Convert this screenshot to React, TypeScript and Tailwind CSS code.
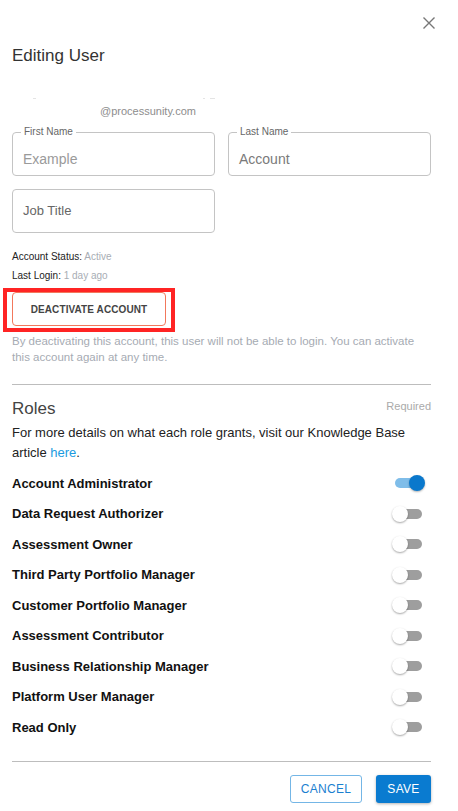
import React from "react";

const roles: { name: string; on: boolean }[] = [
  { name: "Account Administrator", on: true },
  { name: "Data Request Authorizer", on: false },
  { name: "Assessment Owner", on: false },
  { name: "Third Party Portfolio Manager", on: false },
  { name: "Customer Portfolio Manager", on: false },
  { name: "Assessment Contributor", on: false },
  { name: "Business Relationship Manager", on: false },
  { name: "Platform User Manager", on: false },
  { name: "Read Only", on: false },
];

function Toggle({ on }: { on: boolean }) {
  return (
    <div className="relative w-[33px] h-[16px] mr-[6px]">
      <div
        className={
          "absolute left-[3px] top-[3px] w-[27px] h-[10px] rounded-full " +
          (on ? "bg-[#7fbde9]" : "bg-[#9e9e9e]")
        }
      />
      {on ? (
        <div className="absolute right-0 top-0 w-4 h-4 rounded-full bg-[#0a78cc] shadow-[0_1px_2px_rgba(0,0,0,0.3)]" />
      ) : (
        <div className="absolute left-0 top-0 w-4 h-4 rounded-full bg-white shadow-[0_1px_2px_rgba(0,0,0,0.35)]" />
      )}
    </div>
  );
}

function Field({ label, value, valueClass }: { label?: string; value: string; valueClass: string }) {
  return (
    <div
      className={
        "relative h-[44px] rounded-[4px] border border-[#c4c4c4] flex items-center pl-[10px] " +
        (label ? "pt-[11px]" : "")
      }
    >
      {label && (
        <span className="absolute -top-[7px] left-[8px] bg-white px-[3px] text-[10px] leading-[12px] text-[#666]">
          {label}
        </span>
      )}
      <span className={valueClass}>{value}</span>
    </div>
  );
}

export default function App() {
  return (
    <div className="relative w-[458px] h-[811px] bg-white pl-3 pr-[27px] font-['Liberation_Sans',Arial,sans-serif] overflow-hidden">
      <button className="absolute left-[422px] top-[16px] w-[14px] h-[14px]" aria-label="close">
        <svg width="14" height="14" viewBox="0 0 14 14">
          <path d="M1.5 1.5 L12.5 12.5 M12.5 1.5 L1.5 12.5" stroke="#777" strokeWidth="1.4" fill="none" />
        </svg>
      </button>

      <div className="pt-[46px] text-[17px] leading-[20px] text-[#333]">Editing User</div>

      <div className="mt-[32px] h-[2px] flex">
        <span className="ml-[21px] w-[3px] h-[1px] bg-[#e4e4e4]" />
        <span className="ml-[167px] w-[2px] h-[1px] bg-[#e4e4e4]" />
        <span className="ml-[5px] w-[5px] h-[1px] bg-[#e4e4e4]" />
      </div>
      <div className="mt-[4px] pl-[88px] text-[11px] leading-[14px] text-[#8d8d8d]">@processunity.com</div>

      <div className="mt-[14px] grid grid-cols-2 gap-x-[13px] gap-y-[13px]">
        <Field label="First Name" value="Example" valueClass="text-[14px] text-[#9a9a9a]" />
        <Field label="Last Name" value="Account" valueClass="text-[14px] text-[#7a7a7a]" />
        <Field value="Job Title" valueClass="text-[13px] text-[#666]" />
      </div>

      <div className="mt-[14px] text-[10px] leading-[19px] text-[#222]">
        <div>
          Account Status: <span className="text-[#a8adb4]">Active</span>
        </div>
        <div>
          Last Login: <span className="text-[#a8adb4]">1 day ago</span>
        </div>
      </div>

      <div className="relative mt-[7px] w-[154px]">
        <button className="w-[154px] h-[34px] rounded-[4px] border border-[#f2785c] text-[10px] font-bold tracking-[0.1px] text-[#444] flex items-center justify-center">
          DEACTIVATE ACCOUNT
        </button>
        <div className="pointer-events-none absolute -left-[9px] -top-[4px] w-[172px] h-[44px] border-[4px] border-[#ff2424]" />
      </div>

      <p className="mt-[7px] text-[11.5px] leading-[16px] text-[#a6abb3]">
        By deactivating this account, this user will not be able to login. You can activate this account again at any time.
      </p>

      <div className="mt-[19px] h-px bg-[#bdbdbd]" />

      <div className="mt-[14px] flex justify-between items-start">
        <span className="text-[17px] leading-[20px] text-[#444]">Roles</span>
        <span className="text-[11px] leading-[14px] text-[#aaa]">Required</span>
      </div>
      <p className="mt-[4px] text-[13px] leading-[20px] text-[#222]">
        For more details on what each role grants, visit our Knowledge Base article{" "}
        <span className="text-[#1a9be0]">here</span>.
      </p>

      <div className="mt-[5px]">
        {roles.map((r) => (
          <div key={r.name} className="h-[30.5px] flex items-center justify-between">
            <span className="text-[13px] font-bold text-[#111]">{r.name}</span>
            <Toggle on={r.on} />
          </div>
        ))}
      </div>

      <div className="mt-[18px] h-px bg-[#bdbdbd]" />

      <div className="mt-[13px] flex justify-end gap-[14px]">
        <button className="w-[72px] h-[28px] rounded-[3px] border border-[#74b6e6] text-[12px] tracking-[0.3px] text-[#1a80d0]">
          CANCEL
        </button>
        <button className="w-[55px] h-[28px] rounded-[3px] bg-[#0a7bd0] text-[12px] tracking-[0.3px] text-white shadow-[0_1px_3px_rgba(0,0,0,0.3)]">
          SAVE
        </button>
      </div>
    </div>
  );
}
